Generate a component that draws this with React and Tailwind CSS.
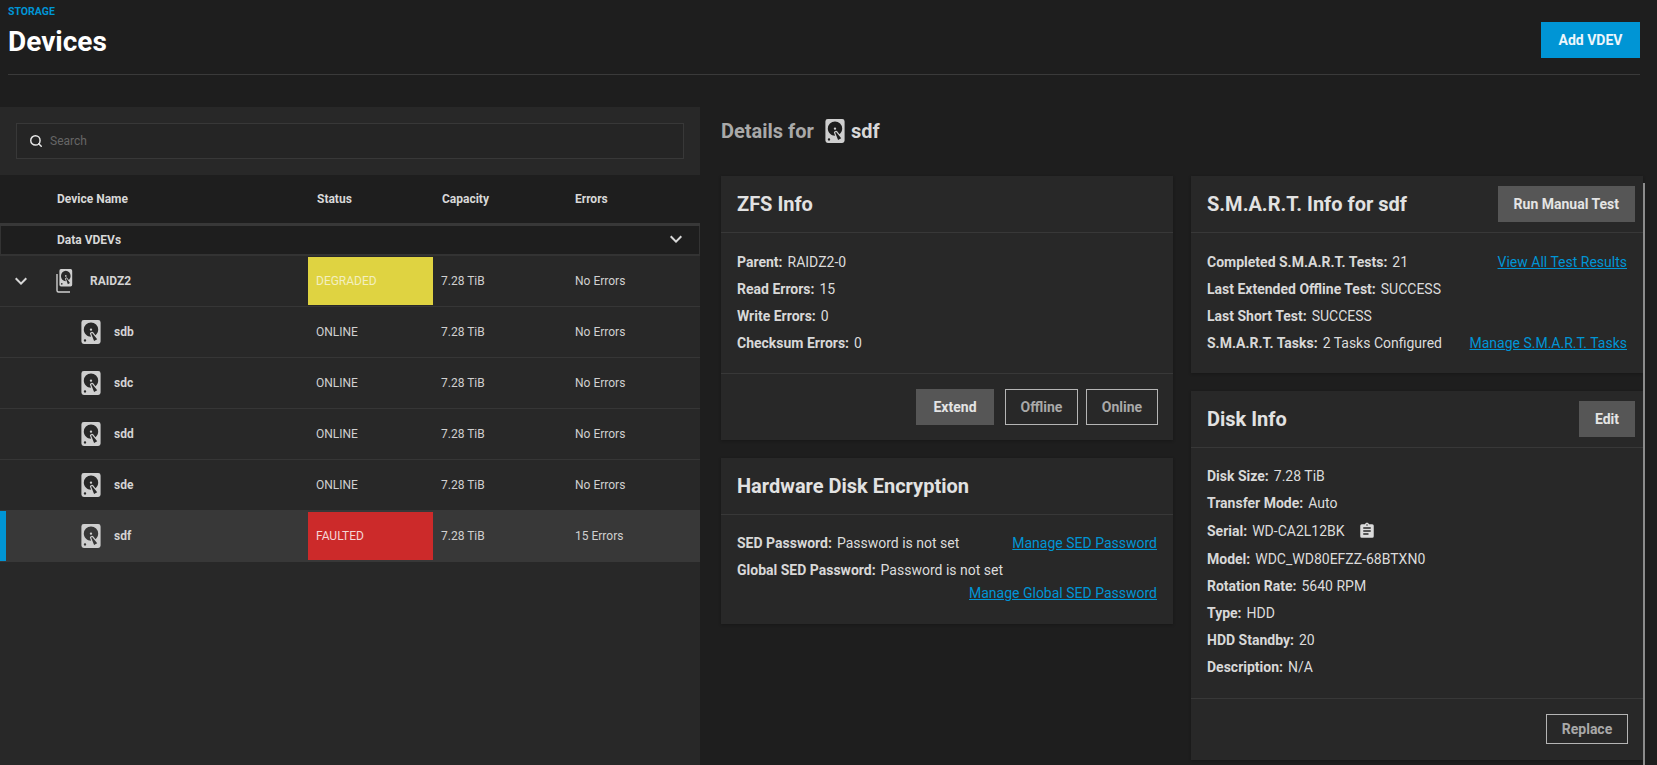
import { Search } from 'lucide-react'

const body = 'font-["Roboto",sans-serif]'

const harddisk =
  'M6,2H18A2,2 0 0,1 20,4V20A2,2 0 0,1 18,22H6A2,2 0 0,1 4,20V4A2,2 0 0,1 6,2M12,4A6,6 0 0,0 6,10C6,13.31 8.69,16 12.1,16L11.22,13.77C10.95,13.29 11.11,12.68 11.59,12.4L12.45,11.9C12.93,11.63 13.54,11.79 13.82,12.27L15.74,14.69C17.12,13.59 18,11.9 18,10A6,6 0 0,0 12,4M12,9A1,1 0 0,1 13,10A1,1 0 0,1 12,11A1,1 0 0,1 11,10A1,1 0 0,1 12,9M7,18A1,1 0 0,0 6,19A1,1 0 0,0 7,20A1,1 0 0,0 8,19A1,1 0 0,0 7,18M12.09,13.27L14.58,19.58L17.17,18.08L12.95,12.77L12.09,13.27Z'

function DiskIcon({ className }) {
  return (
    <svg viewBox="4 2 16 20" className={className} fill="currentColor">
      <path d={harddisk} />
    </svg>
  )
}

function StackIcon() {
  return (
    <svg viewBox="0 0 20 24" className="w-5 h-6 text-[#cfcfcf] shrink-0" fill="none">
      <path d="M1 5V21.5A1.5 1.5 0 0 0 2.5 23H14" stroke="currentColor" strokeWidth="1.4" />
      <g transform="translate(3.4 0) scale(0.8 0.87) translate(-4 -2)">
        <path d={harddisk} fill="currentColor" />
      </g>
    </svg>
  )
}

function Chevron({ className }) {
  return (
    <svg viewBox="0 0 24 24" className={className} fill="currentColor">
      <path d="M16.59 8.59L12 13.17 7.41 8.59 6 10l6 6 6-6z" />
    </svg>
  )
}

const disks = [
  { name: 'sdb', status: 'ONLINE', errors: 'No Errors' },
  { name: 'sdc', status: 'ONLINE', errors: 'No Errors' },
  { name: 'sdd', status: 'ONLINE', errors: 'No Errors' },
  { name: 'sde', status: 'ONLINE', errors: 'No Errors', last: true },
]

const cols = 'grid grid-cols-[308px_125px_134px_1fr] items-center'

function DiskRow({ name, status, errors, last }) {
  return (
    <div className={`${cols} ${last ? 'h-[50px]' : 'h-[51px] border-b border-[#363636]'}`}>
      <div className="flex items-center pl-[81px] gap-[13px]">
        <DiskIcon className="w-5 h-6 text-[#cfcfcf]" />
        <span className="text-xs font-bold text-[#d4d4d4]">{name}</span>
      </div>
      <span className="pl-2 text-xs text-[#d0d0d0]">{status}</span>
      <span className="pl-2 text-xs text-[#d0d0d0]">7.28 TiB</span>
      <span className="pl-2 text-xs text-[#d0d0d0]">{errors}</span>
    </div>
  )
}

function Line({ label, value, link, className = 'h-[27px]', children }) {
  return (
    <div className={`flex items-center justify-between ${className}`}>
      <p className="flex items-center text-[#dcdcdc]">
        <b className="font-bold mr-[5px] text-[#d8d8d8]">{label}</b>
        {value}
        {children}
      </p>
      {link && <a className="text-[#0095d5] underline">{link}</a>}
    </div>
  )
}

function CardHead({ title, action }) {
  return (
    <div className="h-[57px] flex items-center justify-between pl-4 pr-2 border-b border-[#383838]">
      <h3 className="text-xl font-bold text-[#e2e2e2]">{title}</h3>
      {action && (
        <button className="h-9 px-4 bg-[#565656] text-sm font-bold text-[#e4e4e4]">{action}</button>
      )}
    </div>
  )
}

function Outline({ children, className = 'h-9' }) {
  return (
    <button className={`px-4 border border-[#b5b5b5] text-sm font-bold text-[#a8a8a8] ${className}`}>
      {children}
    </button>
  )
}

function Card({ children }) {
  return <div className="bg-[#282828] shadow-[0_1px_3px_rgba(0,0,0,0.25)]">{children}</div>
}

export default function App() {
  return (
    <div className={`relative h-[765px] overflow-hidden bg-[#1e1e1e] flex flex-col ${body}`}>
      <header className="mx-2 mr-[17px] h-[75px] shrink-0 border-b border-[#3a3a3a] flex items-start justify-between">
        <div className="pt-[6px]">
          <p className="text-[10.5px] leading-3 font-bold text-[#0095d5]">STORAGE</p>
          <h1 className="mt-[6px] text-[28px] leading-9 font-bold text-white">Devices</h1>
        </div>
        <button className="mt-[22px] h-9 w-[99px] bg-[#0095d5] text-sm font-bold text-[#eef6fb]">Add VDEV</button>
      </header>

      <div className="flex flex-1 mt-8 min-h-0">
        <section className="w-[700px] shrink-0 bg-[#282828]">
          <div className="h-[68px] pt-4 px-4">
            <div className="h-9 flex items-center bg-[#252525] border border-[#383838] pl-3 gap-[7px]">
              <Search className="w-[14px] h-[14px] text-[#e8e8e8]" strokeWidth={2.5} />
              <span className="text-xs text-[#666]">Search</span>
            </div>
          </div>

          <div className={`${cols} h-[48px] bg-[#1e1e1e] border-b-[3px] border-[#383838] box-content text-xs font-bold text-[#d8d8d8]`}>
            <span className="pl-[57px]">Device Name</span>
            <span className="pl-[9px]">Status</span>
            <span className="pl-[9px]">Capacity</span>
            <span className="pl-2">Errors</span>
          </div>

          <div className="h-[30px] bg-[#1e1e1e] border-x border-b-2 border-[#333] flex items-center justify-between pl-[56px] pr-[11px] text-[#d8d8d8]">
            <span className="text-xs font-bold">Data VDEVs</span>
            <Chevron className="w-6 h-6 -mt-[3px]" />
          </div>

          <div className={`${cols} h-[51px] border-b border-[#363636]`}>
            <div className="flex items-center pl-[9px]">
              <Chevron className="w-6 h-6 text-[#d8d8d8]" />
              <span className="ml-[23px] mr-[14px]"><StackIcon /></span>
              <span className="text-xs font-bold text-[#d4d4d4]">RAIDZ2</span>
            </div>
            <span className="h-[48px] flex items-center pl-2 bg-[#dfd341] text-xs text-[#f3efc0]">DEGRADED</span>
            <span className="pl-2 text-xs text-[#d0d0d0]">7.28 TiB</span>
            <span className="pl-2 text-xs text-[#d0d0d0]">No Errors</span>
          </div>

          {disks.map((d) => (
            <DiskRow key={d.name} {...d} />
          ))}

          <div className={`${cols} relative h-[52px] bg-[#383838]`}>
            <span className="absolute left-0 top-px bottom-px w-[6px] bg-[#0095d5]" />
            <div className="flex items-center pl-[81px] gap-[13px]">
              <DiskIcon className="w-5 h-6 text-[#cfcfcf]" />
              <span className="text-xs font-bold text-[#d4d4d4]">sdf</span>
            </div>
            <span className="h-[48px] flex items-center pl-2 bg-[#cc2a2a] text-xs text-[#f4d6d6]">FAULTED</span>
            <span className="pl-2 text-xs text-[#d0d0d0]">7.28 TiB</span>
            <span className="pl-2 text-xs text-[#d0d0d0]">15 Errors</span>
          </div>
        </section>

        <main className="flex-1 pl-[21px] text-sm">
          <div className="mt-3 mb-[33px] h-6 flex items-center text-xl font-bold text-[#a9a9a9]">
            <span>Details for</span>
            <DiskIcon className="w-5 h-6 ml-[11px] mr-[6px] text-[#cfcfcf]" />
            <span className="text-[#d8d8d8]">sdf</span>
          </div>

          <div className="flex gap-[18px] items-start">
            <div className="w-[452px] flex flex-col gap-[18px]">
              <Card>
                <CardHead title="ZFS Info" />
                <div className="pt-[15px] pb-[17px] px-4 border-b border-[#383838]">
                  <Line label="Parent:" value="RAIDZ2-0" />
                  <Line label="Read Errors:" value="15" />
                  <Line label="Write Errors:" value="0" />
                  <Line label="Checksum Errors:" value="0" />
                </div>
                <div className="flex justify-end items-center pt-[15px] pb-[15px] pr-[15px]">
                  <button className="h-9 w-[78px] bg-[#565656] text-sm font-bold text-[#e4e4e4] mr-[11px]">Extend</button>
                  <Outline className="h-9 w-[73px] mr-2 !px-0">Offline</Outline>
                  <Outline className="h-9 w-[72px] !px-0">Online</Outline>
                </div>
              </Card>

              <Card>
                <CardHead title="Hardware Disk Encryption" />
                <div className="pt-[14px] pb-[21px] pl-4 pr-[16px]">
                  <Line label="SED Password:" value="Password is not set" link="Manage SED Password" />
                  <Line label="Global SED Password:" value="Password is not set" />
                  <div className="h-5 flex items-center justify-end">
                    <a className="text-[#0095d5] underline">Manage Global SED Password</a>
                  </div>
                </div>
              </Card>
            </div>

            <div className="w-[452px] flex flex-col gap-[18px]">
              <Card>
                <CardHead title="S.M.A.R.T. Info for sdf" action="Run Manual Test" />
                <div className="pt-[15px] pb-[17px] pl-4 pr-4">
                  <Line label="Completed S.M.A.R.T. Tests:" value="21" link="View All Test Results" />
                  <Line label="Last Extended Offline Test:" value="SUCCESS" />
                  <Line label="Last Short Test:" value="SUCCESS" />
                  <Line label="S.M.A.R.T. Tasks:" value="2 Tasks Configured" link="Manage S.M.A.R.T. Tasks" />
                </div>
              </Card>

              <Card>
                <CardHead title="Disk Info" action="Edit" />
                <div className="pt-[14px] pb-[18px] px-4 border-b border-[#383838]">
                  <Line label="Disk Size:" value="7.28 TiB" />
                  <Line label="Transfer Mode:" value="Auto" />
                  <Line label="Serial:" value="WD-CA2L12BK" className="h-[29px]">
                    <svg viewBox="0 0 24 24" className="w-[18px] h-[18px] ml-[13px] text-[#dcdcdc]" fill="currentColor">
                      <path d="M17,9H7V7H17M17,13H7V11H17M14,17H7V15H14M12,3A1,1 0 0,1 13,4A1,1 0 0,1 12,5A1,1 0 0,1 11,4A1,1 0 0,1 12,3M19,3H14.82C14.4,1.84 13.3,1 12,1C10.7,1 9.6,1.84 9.18,3H5A2,2 0 0,0 3,5V19A2,2 0 0,0 5,21H19A2,2 0 0,0 21,19V5A2,2 0 0,0 19,3Z" />
                    </svg>
                  </Line>
                  <Line label="Model:" value="WDC_WD80EFZZ-68BTXN0" />
                  <Line label="Rotation Rate:" value="5640 RPM" />
                  <Line label="Type:" value="HDD" />
                  <Line label="HDD Standby:" value="20" />
                  <Line label="Description:" value="N/A" />
                </div>
                <div className="flex justify-end pt-[15px] pb-4 pr-[15px]">
                  <Outline className="h-[30px] w-[82px] !px-0">Replace</Outline>
                </div>
              </Card>
            </div>
          </div>
        </main>
      </div>

      <span className="absolute left-[1643px] top-[183px] bottom-0 w-[2px] bg-[#8c8c8c]" />
    </div>
  )
}
